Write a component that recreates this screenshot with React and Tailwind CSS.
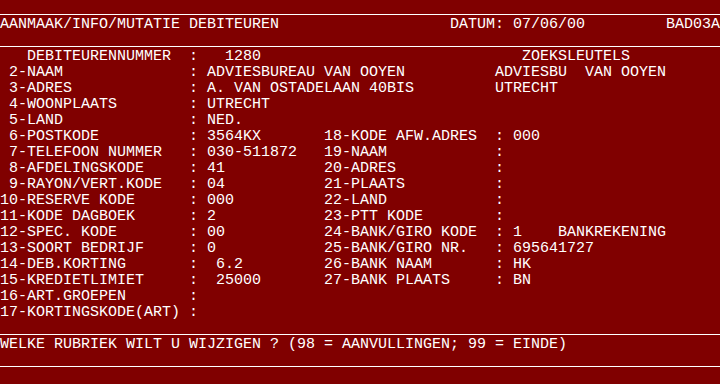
const SCREEN = [
  null,
  [[0, 'AANMAAK/INFO/MUTATIE DEBITEUREN'], [50, 'DATUM: 07/06/00'], [74, 'BAD03A']],
  null,
  [[3, 'DEBITEURENNUMMER'], [21, ':'], [25, '1280'], [58, 'ZOEKSLEUTELS']],
  [[1, '2-NAAM'], [21, ':'], [23, 'ADVIESBUREAU VAN OOYEN'], [55, 'ADVIESBU  VAN OOYEN']],
  [[1, '3-ADRES'], [21, ':'], [23, 'A. VAN OSTADELAAN 40BIS'], [55, 'UTRECHT']],
  [[1, '4-WOONPLAATS'], [21, ':'], [23, 'UTRECHT']],
  [[1, '5-LAND'], [21, ':'], [23, 'NED.']],
  [[1, '6-POSTKODE'], [21, ':'], [23, '3564KX'], [36, '18-KODE AFW.ADRES'], [55, ':'], [57, '000']],
  [[1, '7-TELEFOON NUMMER'], [21, ':'], [23, '030-511872'], [36, '19-NAAM'], [55, ':']],
  [[1, '8-AFDELINGSKODE'], [21, ':'], [23, '41'], [36, '20-ADRES'], [55, ':']],
  [[1, '9-RAYON/VERT.KODE'], [21, ':'], [23, '04'], [36, '21-PLAATS'], [55, ':']],
  [[0, '10-RESERVE KODE'], [21, ':'], [23, '000'], [36, '22-LAND'], [55, ':']],
  [[0, '11-KODE DAGBOEK'], [21, ':'], [23, '2'], [36, '23-PTT KODE'], [55, ':']],
  [[0, '12-SPEC. KODE'], [21, ':'], [23, '00'], [36, '24-BANK/GIRO KODE'], [55, ':'], [57, '1'], [62, 'BANKREKENING']],
  [[0, '13-SOORT BEDRIJF'], [21, ':'], [23, '0'], [36, '25-BANK/GIRO NR.'], [55, ':'], [57, '695641727']],
  [[0, '14-DEB.KORTING'], [21, ':'], [24, '6.2'], [36, '26-BANK NAAM'], [55, ':'], [57, 'HK']],
  [[0, '15-KREDIETLIMIET'], [21, ':'], [24, '25000'], [36, '27-BANK PLAATS'], [55, ':'], [57, 'BN']],
  [[0, '16-ART.GROEPEN'], [21, ':']],
  [[0, '17-KORTINGSKODE(ART)'], [21, ':']],
  null,
  [[0, 'WELKE RUBRIEK WILT U WIJZIGEN ? (98 = AANVULLINGEN; 99 = EINDE)']],
  null,
  [],
]

// put each piece of text at its column, like the terminal does
function lineText(parts) {
  let s = ''
  for (const [col, text] of parts) {
    s = s.padEnd(col, ' ') + text
  }
  return s
}

function Rule() {
  return (
    <div className="h-4 pt-[14px]">
      <div className="h-px bg-white" />
    </div>
  )
}

export default function App() {
  return (
    <div className="w-[720px] h-[384px] overflow-hidden bg-[#800000] text-white font-['Liberation_Mono','DejaVu_Sans_Mono',monospace] text-[15px]">
      {SCREEN.map((parts, i) =>
        parts === null ? (
          <Rule key={i} />
        ) : (
          <div key={i} className="h-4 leading-[18px] whitespace-pre">
            {lineText(parts)}
          </div>
        )
      )}
    </div>
  )
}
